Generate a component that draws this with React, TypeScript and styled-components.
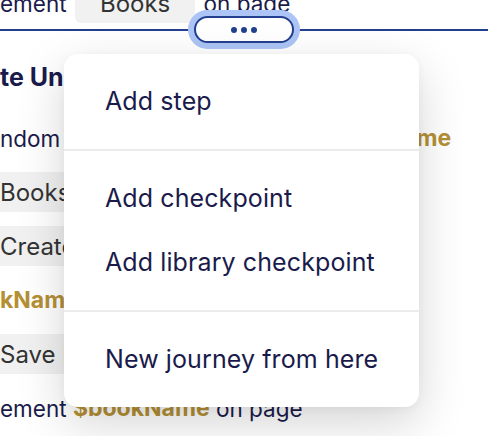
import React from "react";
import styled, { createGlobalStyle } from "styled-components";

const Global = createGlobalStyle`
  html, body { margin: 0; padding: 0; background: #ffffff; }
  body { font-family: Inter, "Noto Sans", sans-serif; overflow: hidden; }
  * { box-sizing: border-box; }
`;

const NAVY = "#1a1b4b";
const GOLD = "#b48f35";
const BLUE = "#22408f";
const HIDDEN = 160;

const Page = styled.div`
  position: relative;
  width: 488px;
  height: 436px;
  overflow: hidden;
  background: #ffffff;
`;

/* the step list is scrolled sideways, so the start of each line sits out of view */
const StepList = styled.div`
  display: flex;
  flex-direction: column;
  margin-left: -${HIDDEN}px;
  margin-top: -17px;
  width: 800px;
`;

const Step = styled.div<{ $h?: number }>`
  display: flex;
  align-items: center;
  height: ${(p) => p.$h ?? 54}px;
  font-size: 22.5px;
  color: ${NAVY};
  white-space: pre;
`;

/* scrolled-off start of a line, right-aligned against the panel edge */
const Lead = styled.span<{ $w?: number }>`
  flex: none;
  width: ${(p) => p.$w ?? HIDDEN}px;
  text-align: right;
  white-space: pre;
`;

const Heading = styled(Step)`
  height: 75px;
  padding-top: 7px;
  font-size: 25px;
  font-weight: 700;
`;

const Var = styled.span`
  color: ${GOLD};
  font-weight: 700;
  font-size: 23px;
`;

const Chip = styled.span`
  display: inline-flex;
  align-items: center;
  height: 40px;
  padding: 0 16px;
  margin: 0 2px;
  border-radius: 6px;
  background: #f1f1f1;
  color: #333333;
  font-size: 24px;
`;

const Quote = styled.span<{ $end?: boolean }>`
  display: inline-block;
  width: 9px;
  align-self: flex-start;
  margin-top: 5px;
  font-size: 13px;
  line-height: 1;
  color: #c2c2c2;
  text-align: ${(p) => (p.$end ? "right" : "left")};
`;

const Connector = styled.div`
  display: flex;
  align-items: center;
  height: 13px;
  width: 488px;
  margin-left: ${HIDDEN}px;
`;

const Line = styled.div`
  flex: 1;
  height: 2px;
  background: ${BLUE};
`;

const MorePill = styled.button`
  display: flex;
  align-items: center;
  justify-content: center;
  gap: 4px;
  flex: none;
  width: 100px;
  height: 27px;
  margin-left: 2px;
  margin-right: 2px;
  padding: 0;
  border: 2px solid ${BLUE};
  border-radius: 14px;
  background: #ffffff;
  box-shadow: 0 0 0 6px #adc5f6;
  position: relative;
  z-index: 1;
`;

const Dot = styled.span`
  width: 6px;
  height: 6px;
  border-radius: 50%;
  background: ${BLUE};
`;

const Menu = styled.div`
  position: absolute;
  left: 64px;
  top: 54px;
  width: 355px;
  border-radius: 14px;
  background: #ffffff;
  box-shadow: 0 16px 48px rgba(0, 0, 0, 0.17), 0 2px 10px rgba(0, 0, 0, 0.04);
  display: flex;
  flex-direction: column;
  z-index: 2;
`;

const Section = styled.div`
  padding: 15px 0 16px;
  & + & {
    border-top: 2px solid #ebebeb;
  }
`;

const Item = styled.div`
  display: flex;
  align-items: center;
  height: 64px;
  padding-left: 41px;
  font-size: 25px;
  letter-spacing: 0.1px;
  color: ${NAVY};
  white-space: nowrap;
`;

const Label = ({ children }: { children: React.ReactNode }) => (
  <Chip>
    <Quote>"</Quote>
    {children}
    <Quote $end>"</Quote>
  </Chip>
);

export default function App() {
  return (
    <Page>
      <Global />
      <StepList>
        <Step $h={40}>
          <Lead>Check el</Lead>
          {"ement "}
          <Label>Books</Label>
          {" on page"}
        </Step>
        <Connector>
          <Line />
          <MorePill aria-label="More actions">
            <Dot />
            <Dot />
            <Dot />
          </MorePill>
          <Line />
        </Connector>
        <Heading>
          <Lead>Crea</Lead>
          te Unique Book
        </Heading>
        <Step>
          <Lead>Generate ra</Lead>
          {"ndom names and store it into "}
          <Var>$bookName</Var>
        </Step>
        <Step>
          <Lead $w={HIDDEN - 27}>{"Click "}</Lead>
          <Label>Books</Label>
        </Step>
        <Step>
          <Lead $w={HIDDEN - 27}>{"Click "}</Lead>
          <Label>Create Book</Label>
        </Step>
        <Step>
          <Lead>
            {"Enter "}
            <Var>$boo</Var>
          </Lead>
          <Var>kName</Var>
          {" into title"}
        </Step>
        <Step>
          <Lead $w={HIDDEN - 27}>{"Click "}</Lead>
          <Label>Save Book</Label>
        </Step>
        <Step>
          <Lead>Check el</Lead>
          {"ement "}
          <Var>$bookName</Var>
          {" on page"}
        </Step>
      </StepList>
      <Menu role="menu">
        <Section>
          <Item>Add step</Item>
        </Section>
        <Section>
          <Item>Add checkpoint</Item>
          <Item>Add library checkpoint</Item>
        </Section>
        <Section>
          <Item>New journey from here</Item>
        </Section>
      </Menu>
    </Page>
  );
}
